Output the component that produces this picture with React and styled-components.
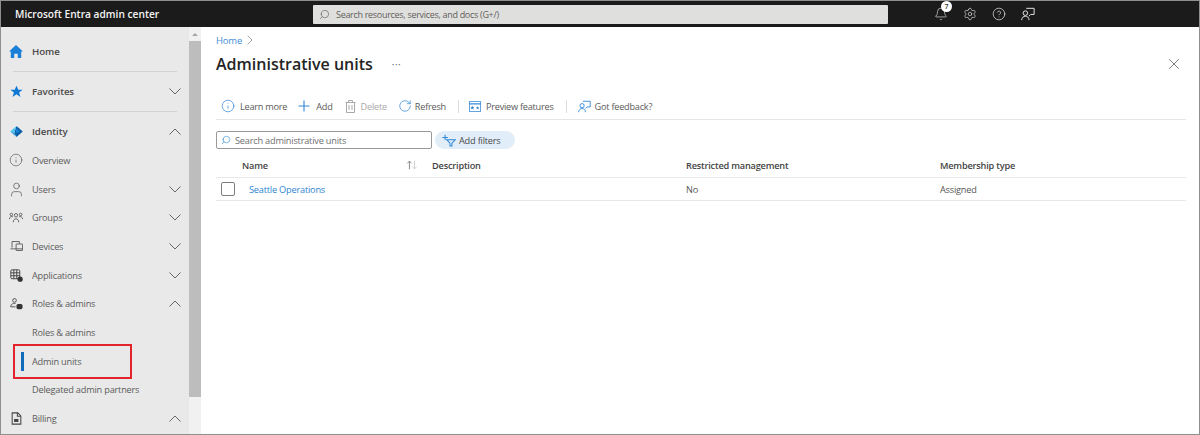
import React from "react";
import styled, { createGlobalStyle } from "styled-components";
import { Info, User, RotateCw, Search, X, Bell, Settings, CircleHelp, ChevronRight } from "lucide-react";

const Global = createGlobalStyle`
  * { box-sizing: border-box; }
  html, body, #root { height: 100%; }
  body {
    margin: 0;
    background: #fff;
    font-family: "Open Sans", "Noto Sans", sans-serif;
    font-size: 9.2px;
    letter-spacing: -0.2px;
    color: #323130;
    overflow: hidden;
  }
`;

const Frame = styled.div`
  width: 1200px; height: 435px;
  border: 1px solid #8f8f8f;
  display: grid;
  grid-template-rows: 26px 1fr;
  overflow: hidden;
`;

// ===== Top bar =====
const TopBar = styled.header`
  background: #1b1b1b;
  color: #fff;
  display: flex;
  align-items: center;
  padding-left: 14px;
`;
const Brand = styled.div`width: 298px; font-size: 10.2px; font-weight: 600; color: #f4f4f4; letter-spacing: 0;`;
const GlobalSearch = styled.div`
  width: 575px; height: 19px;
  background: #dfdfdd;
  border-radius: 1px;
  display: flex; align-items: center; gap: 6px;
  padding-left: 6px;
  color: #5f5e5c;
  font-size: 9px;
  letter-spacing: -0.3px;
  svg { transform: scaleX(-1); }
`;
const TopIcons = styled.div`
  display: flex; align-items: center; gap: 15px;
  margin-left: 46px;
  color: #e8e8e8;
`;
const BellWrap = styled.div`position: relative; display: flex;`;
const Badge = styled.span`
  position: absolute; top: -6px; left: 7px;
  width: 11px; height: 11px; border-radius: 50%;
  background: #fff; color: #323130;
  font-size: 7px; font-weight: 600;
  display: flex; align-items: center; justify-content: center;
`;

// ===== Body =====
const Body = styled.div`
  display: grid;
  grid-template-columns: 188px 12px 1fr;
  min-height: 0;
`;
const Sidebar = styled.nav`
  background: #e9e9e9;
  overflow: hidden;
  padding-top: 4px;
`;
const TopRow = styled.div`
  height: ${(p) => p.$h || 40}px;
  padding: ${(p) => p.$pt || 0}px 8px 0 9px;
  display: flex; align-items: center;
  gap: 10px;
  font-size: 9.7px;
  font-weight: 600;
  letter-spacing: -0.1px;
  color: #4a4a4a;
`;
const Divider = styled.div`height: 1px; background: #d3d3d3; margin: 0 12px;`;
const NavRow = styled.div`
  height: 28.7px;
  display: flex; align-items: center;
  padding: 0 8px 0 9px;
  gap: 10px;
  color: #5c5c5c;
  position: relative;
`;
const SubRow = styled(NavRow)`padding-left: 31px;`;
const IconBox = styled.span`
  width: 12px; height: 14px; display: flex; align-items: center; justify-content: center; flex: none;
  color: #555;
  svg { flex: none; }
`;
const Grow = styled.span`flex: 1;`;
const ActiveBar = styled.span`
  position: absolute; left: 20px; top: 5.5px; bottom: 5px; width: 2.5px; background: #0f6cbd;
`;
const Highlight = styled.span`
  position: absolute; left: 12px; top: -3px; width: 119px; height: 35px;
  border: 2px solid #e3242b;
  pointer-events: none;
`;
const Scrollbar = styled.div`
  background: #f1f1f1;
  display: flex; flex-direction: column;
`;
const ScrollArrow = styled.div`
  height: 14px; display: flex; align-items: center; justify-content: center;
  &::before {
    content: ""; border: 3px solid transparent; border-top: 0; border-bottom: 3px solid #a6a6a6;
  }
`;
const ScrollThumb = styled.div`height: 356px; background: #bdbdbd;`;

// ===== Main =====
const Main = styled.main`
  padding: 0 13px 0 15px;
  min-width: 0;
`;
const Breadcrumb = styled.div`
  height: 26px; display: flex; align-items: center;
  color: #3f8fd8; font-size: 9.5px;
  svg { color: #777; }
`;
const TitleRow = styled.div`
  height: 22px; display: flex; align-items: center;
`;
const Title = styled.h1`
  margin: 0; font-size: 16px; font-weight: 600; color: #242424; letter-spacing: 0;
`;
const Dots = styled.span`margin-left: 19px; color: #666; font-size: 10px; letter-spacing: .5px;`;
const CloseBtn = styled.span`margin-left: auto; margin-right: 3px; color: #555; display: flex;`;
const Toolbar = styled.div`
  margin-top: 18px;
  height: 27px;
  padding-left: 5px;
  border-bottom: 1px solid #e5e5e5;
  display: flex; align-items: center;
  color: #5a5a5a;
  letter-spacing: -0.25px;
`;
const ToolBtn = styled.span`
  display: inline-flex; align-items: center; gap: ${(p) => p.$gap ?? 6}px;
  margin-right: ${(p) => p.$mr ?? 12}px;
  color: ${(p) => (p.$disabled ? "#a9a9a9" : "inherit")};
  svg { color: ${(p) => (p.$disabled ? "#a9a9a9" : "#2f86d4")}; flex: none; }
`;
const ToolSep = styled.span`width: 1px; height: 13px; background: #dcdcdc; margin-right: ${(p) => p.$mr}px;`;
const FilterRow = styled.div`
  margin-top: 11px;
  display: flex; align-items: center; gap: 3px;
`;
const SearchBox = styled.div`
  width: 216px; height: 18px;
  border: 1px solid #9a9a9a;
  border-radius: 2px;
  display: flex; align-items: center; gap: 4px;
  padding-left: 4px;
  color: #6f6f6f;
  svg { color: #2f86d4; transform: scaleX(-1); }
`;
const FilterPill = styled.div`
  width: 80px; height: 18px; border-radius: 9px;
  background: #e1eefa;
  display: flex; align-items: center; gap: 3px;
  padding-left: 7px;
  color: #4a4a4a;
`;
const TableRow = styled.div`
  display: grid;
  grid-template-columns: 26px 190px 254px 254px 1fr;
  align-items: center;
  height: ${(p) => p.$h}px;
  padding-top: ${(p) => p.$pt || 0}px;
  border-bottom: 1px solid #e8e8e8;
  color: #565656;
`;
const HeadCell = styled.div`
  font-weight: 600; color: #444;
  display: flex; align-items: center; justify-content: space-between;
  padding-right: 14px;
`;
const Arrows = styled.span`display: inline-flex; width: 12px; color: #888;`;
const CheckCell = styled.div`padding-left: 5px; display: flex;`;
const Checkbox = styled.span`
  width: 14px; height: 14px; border: 1px solid #7d7d7d; border-radius: 2px; display: block;
`;
const LinkCell = styled.div`color: #2f86d4; padding-left: 7px;`;

// ===== Icons =====
const HomeIcon = () => (
  <svg width="14" height="13" viewBox="0 0 16 15">
    <path d="M8 0 L16 7.5 L14 7.5 L14 15 L10 15 L10 10 L6 10 L6 15 L2 15 L2 7.5 L0 7.5 Z" fill="#1a7fd6" />
  </svg>
);
const StarIcon = () => (
  <svg width="13" height="13" viewBox="0 0 16 16">
    <path d="M8 .8l2.2 5h5.3l-4.3 3.3 1.7 5.6L8 11.4l-4.9 3.3 1.7-5.6L.5 5.8h5.3z" fill="#0f78d4" />
  </svg>
);
const IdentityIcon = () => (
  <svg width="13" height="11" viewBox="0 0 16 14">
    <path d="M8 0 L16 7 L8 14 L5 9 Z" fill="#0b5fa8" />
    <path d="M8 0 L0 7 L5 9 Z" fill="#4cc3f0" />
    <path d="M0 7 L8 14 L5 9 Z" fill="#2b9fe0" />
    <path d="M8 3 L12 7 L7 9 Z" fill="#1b86d8" />
  </svg>
);
const GroupsIcon = () => (
  <svg width="14" height="12" viewBox="0 0 18 15" fill="none" stroke="#555" strokeWidth="1.1">
    <circle cx="9" cy="4" r="2.2" /><path d="M5.5 13c0-6 7-6 7 0" />
    <circle cx="3" cy="3" r="1.6" /><path d="M.5 9c0-3 3-4 4.5-3" />
    <circle cx="15" cy="3" r="1.6" /><path d="M17.5 9c0-3-3-4-4.5-3" />
  </svg>
);
const DevicesIcon = () => (
  <svg width="13" height="12" viewBox="0 0 16 14" fill="none" stroke="#555" strokeWidth="1.1">
    <path d="M2.5 9V1.5h9V4" /><path d="M.5 10.5h7" /><rect x="7.5" y="4.5" width="8" height="8" rx=".5" /><path d="M7.5 10.5h8" />
  </svg>
);
const AppsIcon = () => (
  <svg width="13" height="13" viewBox="0 0 16 16">
    <g fill="none" stroke="#444" strokeWidth="1.2">
      <rect x="1" y="1" width="11" height="11" rx="1.5" />
      <path d="M1 4.7h11M1 8.3h11M4.7 1v11M8.3 1v11" />
    </g>
    <circle cx="12.5" cy="12.5" r="3.2" fill="#333" />
  </svg>
);
const RolesIcon = () => (
  <svg width="13" height="12" viewBox="0 0 16 15">
    <g fill="none" stroke="#444" strokeWidth="1.1">
      <circle cx="5.5" cy="3" r="2.3" /><path d="M.8 11c0-4 4-4.6 6-4.2M.8 11h6" />
    </g>
    <rect x="8" y="7.5" width="7.5" height="6.5" rx="2" fill="#333" />
  </svg>
);
const BillingIcon = () => (
  <svg width="11" height="13" viewBox="0 0 12 15" fill="none" stroke="#444" strokeWidth="1.2">
    <path d="M1 1h6.5L11 4.5V14H1z" /><path d="M7 1v4h4" /><rect x="3.2" y="8" width="5" height="3.5" fill="#444" stroke="none" />
  </svg>
);
const FeedbackIcon = ({ color = "#2f86d4", size = 13 }) => (
  <svg width={size} height={size} viewBox="0 0 16 16" fill="none" stroke={color} strokeWidth="1.1">
    <path d="M6 1.5h9v7H11L9 10.5" />
    <circle cx="5" cy="7" r="2.6" />
    <path d="M.8 15c0-6 8.4-6 8.4 0" />
  </svg>
);
const PlusIcon = () => (
  <svg width="12" height="12" viewBox="0 0 12 12" fill="none" stroke="#2f86d4" strokeWidth="1.1">
    <path d="M6 .5v11M.5 6h11" />
  </svg>
);
const TrashIcon = () => (
  <svg width="11" height="13" viewBox="0 0 11 13" fill="none" stroke="#a9a9a9" strokeWidth="1">
    <path d="M.5 2.5h10M3.5 2.5V.5h4v2M1.5 2.5V12.500h8V2.500M4 5v5M7 5v5" />
  </svg>
);
const PreviewIcon = () => (
  <svg width="12" height="11" viewBox="0 0 16 14">
    <rect x=".5" y=".5" width="15" height="13" fill="#fff" stroke="#2f86d4" />
    <path d="M.5 3.5h15" stroke="#2f86d4" strokeWidth="1.6" />
    <path d="M4.5 6l.8 1.7 1.8.2-1.3 1.2.3 1.8-1.6-.9-1.6.9.3-1.8L1.9 7.9l1.8-.2zM11.5 6.5l.7 1.4 1.5.2-1.100 1 .3 1.500-1.400-.7-1.400.7.3-1.500-1.100-1 1.500-.2z" fill="#2f86d4" />
  </svg>
);
const AddFilterIcon = () => (
  <svg width="14" height="13" viewBox="0 0 18 16" fill="none" stroke="#2f86d4" strokeWidth="1.3">
    <path d="M4 .5v7M.5 4h7" />
    <path d="M6 7h11l-4.200 4.500V15h-2.500v-3.500z" />
  </svg>
);
const SortIcon = () => (
  <svg width="12" height="10" viewBox="0 0 14 11" fill="none" strokeWidth="1">
    <path d="M4 10.500V1M1.500 3.500L4 1l2.500 2.500" stroke="#777" />
    <path d="M10 .5v9.500M7.500 7.500L10 10l2.500-2.500" stroke="#c9c9c9" />
  </svg>
);
const Chevron = ({ up }) => (
  <svg width="12" height="7" viewBox="0 0 12 7" fill="none" stroke="#666" strokeWidth="1">
    <path d={up ? "M.5 6.500L6 1l5.500 5.500" : "M.5.5L6 6 11.500.5"} />
  </svg>
);

export default function App() {
  return (
    <>
      <Global />
      <Frame>
        <TopBar>
          <Brand>Microsoft Entra admin center</Brand>
          <GlobalSearch>
            <Search size={11} strokeWidth={1.4} />
            Search resources, services, and docs (G+/)
          </GlobalSearch>
          <TopIcons>
            <BellWrap>
              <Bell size={14} strokeWidth={1.1} />
              <Badge>7</Badge>
            </BellWrap>
            <Settings size={14} strokeWidth={1.1} />
            <CircleHelp size={14} strokeWidth={1.2} />
            <FeedbackIcon color="#e8e8e8" size={14} />
          </TopIcons>
        </TopBar>
        <Body>
          <Sidebar>
            <TopRow><IconBox><HomeIcon /></IconBox>Home</TopRow>
            <Divider />
            <TopRow $h={39}><IconBox><StarIcon /></IconBox>Favorites<Grow /><Chevron /></TopRow>
            <Divider />
            <TopRow $h={34} $pt={5}><IconBox><IdentityIcon /></IconBox>Identity<Grow /><Chevron up /></TopRow>
            <NavRow><IconBox><Info size={14} strokeWidth={1.1} /></IconBox>Overview</NavRow>
            <NavRow><IconBox><User size={17} strokeWidth={1} /></IconBox>Users<Grow /><Chevron /></NavRow>
            <NavRow><IconBox><GroupsIcon /></IconBox>Groups<Grow /><Chevron /></NavRow>
            <NavRow><IconBox><DevicesIcon /></IconBox>Devices<Grow /><Chevron /></NavRow>
            <NavRow><IconBox><AppsIcon /></IconBox>Applications<Grow /><Chevron /></NavRow>
            <NavRow><IconBox><RolesIcon /></IconBox>Roles &amp; admins<Grow /><Chevron up /></NavRow>
            <SubRow>Roles &amp; admins</SubRow>
            <SubRow>
              <ActiveBar />
              <Highlight />
              Admin units
            </SubRow>
            <SubRow>Delegated admin partners</SubRow>
            <NavRow><IconBox><BillingIcon /></IconBox>Billing<Grow /><Chevron up /></NavRow>
          </Sidebar>
          <Scrollbar>
            <ScrollArrow />
            <ScrollThumb />
          </Scrollbar>
          <Main>
            <Breadcrumb>Home<ChevronRight size={16} strokeWidth={1} /></Breadcrumb>
            <TitleRow>
              <Title>Administrative units</Title>
              <Dots>···</Dots>
              <CloseBtn><X size={18} strokeWidth={1} /></CloseBtn>
            </TitleRow>
            <Toolbar>
              <ToolBtn $gap={5} $mr={11}><Info size={14} strokeWidth={1.2} />Learn more</ToolBtn>
              <ToolBtn><PlusIcon />Add</ToolBtn>
              <ToolBtn $disabled $gap={5} $mr={11}><TrashIcon />Delete</ToolBtn>
              <ToolBtn $gap={3}><RotateCw size={14} strokeWidth={1.2} />Refresh</ToolBtn>
              <ToolSep $mr={10} />
              <ToolBtn $gap={5}><PreviewIcon />Preview features</ToolBtn>
              <ToolSep $mr={11} />
              <ToolBtn $gap={4}><FeedbackIcon />Got feedback?</ToolBtn>
            </Toolbar>
            <FilterRow>
              <SearchBox><Search size={10} strokeWidth={1.4} />Search administrative units</SearchBox>
              <FilterPill><AddFilterIcon />Add filters</FilterPill>
            </FilterRow>
            <TableRow $h={29} $pt={4}>
              <span />
              <HeadCell>Name<Arrows><SortIcon /></Arrows></HeadCell>
              <HeadCell>Description</HeadCell>
              <HeadCell>Restricted management</HeadCell>
              <HeadCell>Membership type</HeadCell>
            </TableRow>
            <TableRow $h={23}>
              <CheckCell><Checkbox /></CheckCell>
              <LinkCell>Seattle Operations</LinkCell>
              <span />
              <span>No</span>
              <span>Assigned</span>
            </TableRow>
          </Main>
        </Body>
      </Frame>
    </>
  );
}
